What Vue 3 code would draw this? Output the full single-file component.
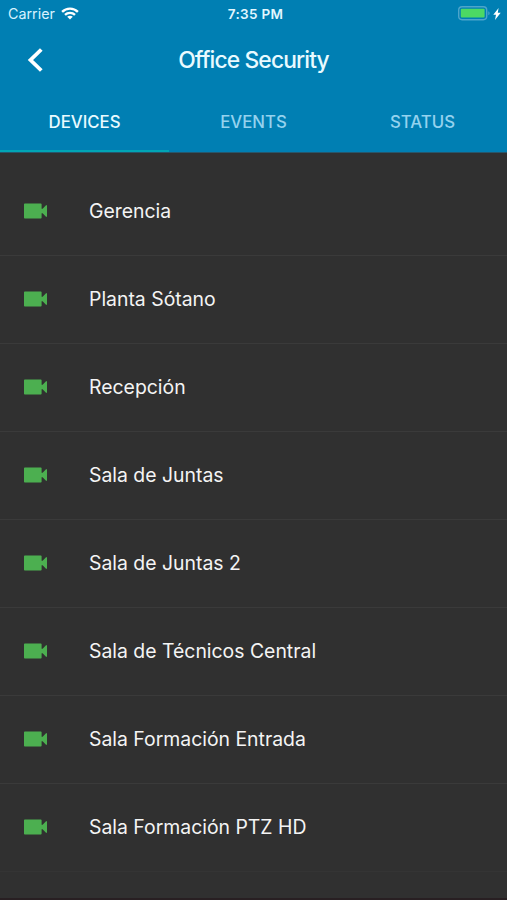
<script setup>
const tabs = ['DEVICES', 'EVENTS', 'STATUS']
const devices = [
  'Gerencia',
  'Planta Sótano',
  'Recepción',
  'Sala de Juntas',
  'Sala de Juntas 2',
  'Sala de Técnicos Central',
  'Sala Formación Entrada',
  'Sala Formación PTZ HD',
]
</script>

<template>
  <main class="screen">
    <header class="header">
      <div class="status-bar">
        <div class="carrier">
          <span>Carrier</span>
          <svg class="wifi" width="18" height="13" viewBox="0 0 18 13" fill="none" stroke="#fff" stroke-width="2.3">
            <path d="M1.1 4.9C5.5.4 12.5.4 16.9 4.9" />
            <path d="M4 7.9c2.8-2.8 7.2-2.8 10 0" />
            <path d="M9 12.5 6.2 9.8c1.6-1.4 4-1.4 5.6 0Z" fill="#fff" stroke="none" />
          </svg>
        </div>
        <span class="time">7:35 PM</span>
        <div class="power">
          <svg width="33" height="15" viewBox="0 0 33 15">
            <rect x=".7" y=".7" width="28" height="13" rx="3.4" fill="none" stroke="#4da5cb" stroke-width="1.4" />
            <rect x="2.8" y="2.8" width="23.8" height="8.8" rx="1" fill="#4cd964" />
            <path d="M30.3 5.2c1.8.7 1.8 3.3 0 4Z" fill="#4da5cb" />
          </svg>
          <svg class="bolt" width="8" height="14" viewBox="0 0 8 14">
            <path d="M5.6 1 .3 7.8h2.7L2 13l5.7-7.3H4.8Z" fill="#fff" />
          </svg>
        </div>
      </div>
      <div class="title-bar">
        <svg class="back" width="18" height="26" viewBox="0 0 18 26">
          <path d="M15.3 2.5 4.5 13l10.8 10.5" fill="none" stroke="#fff" stroke-width="3.8" />
        </svg>
        <h1>Office Security</h1>
      </div>
      <nav class="tabs">
        <button v-for="(tab, i) in tabs" :key="tab" :class="{ active: i === 0 }">{{ tab }}</button>
      </nav>
    </header>
    <ul class="devices">
      <li v-for="device in devices" :key="device">
        <svg class="camera" width="23" height="16" viewBox="0 0 23 16">
          <path d="M.8.5h16a.8.8 0 0 1 .8.8v4.4h1L22 2.3h1v11.4h-1l-3.4-3.4h-1v4.4a.8.8 0 0 1-.8.8H.8a.8.8 0 0 1-.8-.8V1.3A.8.8 0 0 1 .8.5Z" fill="#4caf50" />
        </svg>
        <span>{{ device }}</span>
      </li>
    </ul>
  </main>
</template>

<style>
body {
  background: #303030;
}
</style>

<style scoped>
.screen {
  box-sizing: border-box;
  height: 900px;
  overflow: hidden;
  background: #303030;
  border-bottom: 2px solid #281f22;
  font-family: Inter, "Liberation Sans", sans-serif;
  color: #f4f4f4;
}
.header {
  height: 152px;
  background: #007fb3;
  border-bottom: 1px solid #27566b;
}
.status-bar {
  display: grid;
  grid-template-columns: 1fr auto 1fr;
  align-items: center;
  height: 27px;
  padding: 0 6px 0 8px;
}
.carrier {
  display: flex;
  align-items: center;
  gap: 6px;
  font-size: 14.3px;
  color: #d6f2ff;
}
.time {
  padding-left: 2px;
  font-size: 13.5px;
  font-weight: 600;
  letter-spacing: 0.3px;
  color: #e3f7ff;
}
.power {
  display: flex;
  align-items: center;
  justify-content: flex-end;
  gap: 2px;
}
.title-bar {
  display: grid;
  grid-template-columns: 60px 1fr 60px;
  align-items: center;
  height: 65px;
}
.back {
  margin-left: 26px;
}
h1 {
  margin: 0;
  text-align: center;
  font-size: 22.8px;
  font-weight: 550;
  letter-spacing: -0.85px;
  color: #e9faff;
}
.tabs {
  display: grid;
  grid-template-columns: repeat(3, 1fr);
  height: 60px;
}
.tabs button {
  padding: 2px 0 0;
  border: 0;
  border-bottom: 2px solid transparent;
  background: none;
  font: 500 16.8px Inter, sans-serif;
  color: #94d2ee;
}
.tabs .active {
  border-color: #00a5b5;
  color: #e9faff;
}
.devices {
  margin: 0;
  padding: 15px 0 0;
  list-style: none;
}
.devices li {
  box-sizing: border-box;
  display: flex;
  align-items: center;
  gap: 42px;
  height: 88px;
  padding: 0 0 2px 24px;
  border-bottom: 1px solid #3a3a3a;
  font-size: 19.4px;
}
.devices li:last-child {
  border-color: #343434;
}
</style>
